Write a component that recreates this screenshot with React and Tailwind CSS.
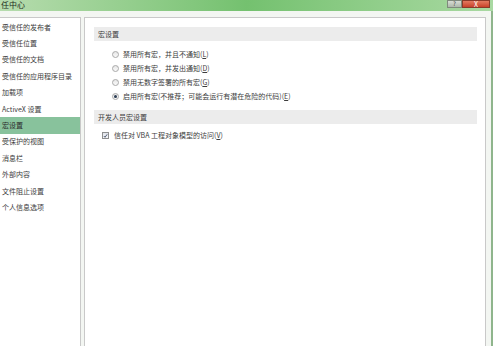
const NAV = [
  '受信任的发布者',
  '受信任位置',
  '受信任的文档',
  '受信任的应用程序目录',
  '加载项',
  'ActiveX 设置',
  '宏设置',
  '受保护的视图',
  '消息栏',
  '外部内容',
  '文件阻止设置',
  '个人信息选项',
]

const OPTIONS = [
  ['禁用所有宏，并且不通知(', 'L', ')'],
  ['禁用所有宏，并发出通知(', 'D', ')'],
  ['禁用无数字签署的所有宏(', 'G', ')'],
  ['启用所有宏(不推荐；可能会运行有潜在危险的代码)(', 'E', ')'],
]

function Radio({ checked }) {
  return (
    <span className="w-[7px] h-[7px] rounded-full border border-[#a9a9a9] bg-gradient-to-b from-[#e6e6e6] to-[#fafafa] flex items-center justify-center shrink-0">
      {checked && <span className="w-[3px] h-[3px] rounded-full bg-[#2a3c52]" />}
    </span>
  )
}

export default function App() {
  return (
    <div
      className="w-[493px] h-[346px] overflow-hidden bg-[#f3f6f2] flex flex-col text-[7px] text-[#3c3c3c] leading-none"
      style={{ fontFamily: '"Noto Sans CJK SC", "Liberation Sans", sans-serif' }}
    >
      <div className="h-[11px] shrink-0 flex items-start bg-gradient-to-r from-[#b6dcae] via-[#74c16f] to-[#a9d9a2] relative">
        <span className="text-[8px] text-[#1d2a1c] pl-[1px] pt-[1px]">任中心</span>
        <div className="ml-auto flex h-[8px]">
          <div className="w-[15px] bg-gradient-to-b from-[#d8ddd6] to-[#aeb8ab] border border-[#7f8a7c] text-[6px] flex items-center justify-center text-[#333]">?</div>
          <div className="w-[28px] bg-gradient-to-b from-[#e3795f] to-[#c8402a] border border-[#8a3a2a] text-[7px] text-white flex items-center justify-center">X</div>
          <div className="w-[3px]" />
        </div>
      </div>
      <div className="flex-1 flex pt-[6px] pr-[5px] gap-[3px] border-r-2 border-[#8fb58c]">
        <div className="w-[81px] bg-white border-t border-r border-[#c9c9c9] pt-[1px] shrink-0">
          {NAV.map((n) => (
            <div
              key={n}
              className={`h-[16.4px] flex items-center pl-[2px] ${n === '宏设置' ? 'bg-[#88c29c] text-[#2c2c2c]' : ''}`}
            >
              {n}
            </div>
          ))}
        </div>
        <div className="flex-1 bg-white border-t border-l border-r border-[#c9c9c9] pt-[9px] pl-[9px] pr-[8px]">
          <div className="h-[14px] bg-[#ececec] flex items-center pl-[4px]">宏设置</div>
          <div className="pl-[18px] pt-[6px] flex flex-col">
            {OPTIONS.map(([a, k, b], i) => (
              <div key={k} className="h-[14px] flex items-center gap-[4px]">
                <Radio checked={i === 3} />
                <span>
                  {a}
                  <span className="underline">{k}</span>
                  {b}
                </span>
              </div>
            ))}
          </div>
          <div className="h-[14px] bg-[#ececec] flex items-center pl-[4px] mt-[7px]">开发人员宏设置</div>
          <div className="pl-[8px] pt-[8px] flex items-center gap-[5px]">
            <span className="w-[7px] h-[7px] border border-[#8e8f8f] bg-gradient-to-b from-[#dfe3ea] to-[#f7f8fa] flex items-center justify-center">
              <svg width="6" height="6" viewBox="0 0 6 6">
                <path d="M1 3 L2.4 4.6 L5 1" fill="none" stroke="#34415a" strokeWidth="1" />
              </svg>
            </span>
            <span>
              信任对 VBA 工程对象模型的访问(<span className="underline">V</span>)
            </span>
          </div>
        </div>
      </div>
    </div>
  )
}
